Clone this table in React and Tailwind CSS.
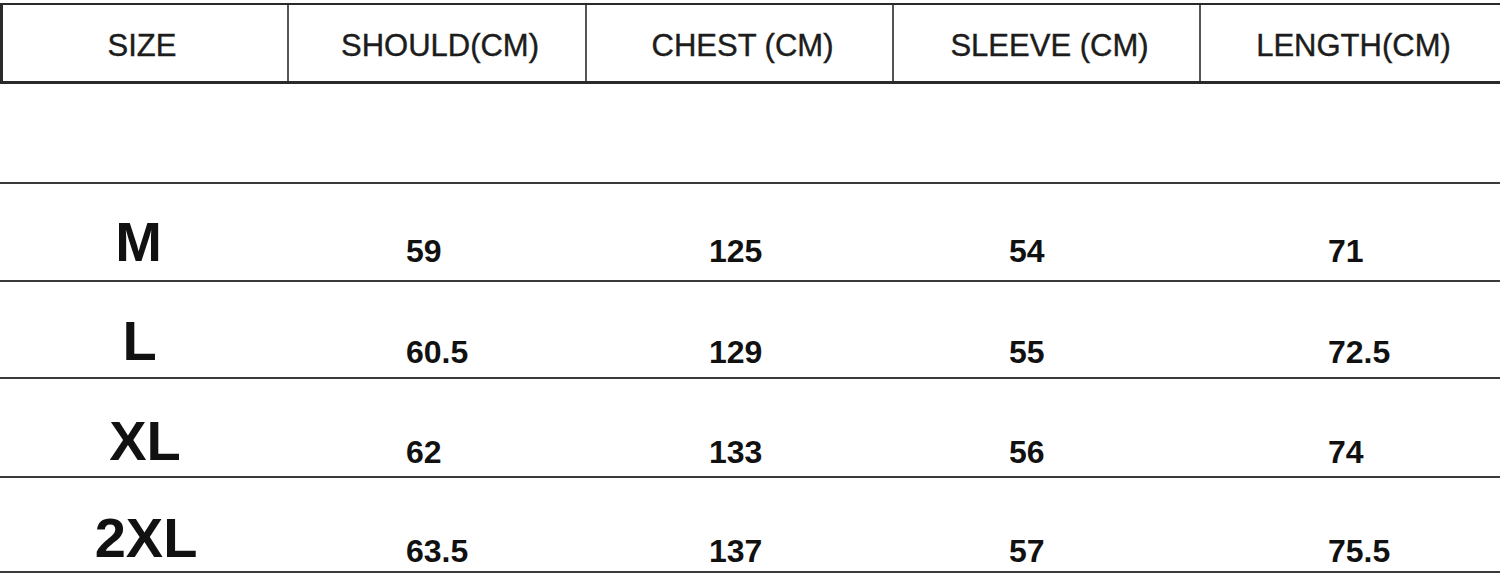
import React from 'react';

const headers = ['SIZE', 'SHOULD(CM)', 'CHEST (CM)', 'SLEEVE (CM)', 'LENGTH(CM)'];
const headPad = ['pr-[6px]', 'pl-[6px]', 'pl-[6px]', 'pl-[6px]', 'pl-[6px]'];

const rows = [
  { size: 'M', vals: ['59', '125', '54', '71'], h: 'h-[98px]', lp: 'pb-[10px] pr-[10px]', np: 'pb-[13px]' },
  { size: 'L', vals: ['60.5', '129', '55', '72.5'], h: 'h-[97px]', lp: 'pb-[8px] pr-[8px]', np: 'pb-[9px]' },
  { size: 'XL', vals: ['62', '133', '56', '74'], h: 'h-[99px]', lp: 'pb-[7px] pl-[3px]', np: 'pb-[8px]' },
  { size: '2XL', vals: ['63.5', '137', '57', '75.5'], h: 'h-[97px]', lp: 'pb-[5px] pl-[5px]', np: 'pb-[4px]' },
];

const valPad = ['pl-[119px]', 'pl-[124px]', 'pl-[117px]', 'pl-[129px]'];

function HeaderRow() {
  return (
    <div className="mt-[3px] h-[81px] grid grid-cols-[284px_298px_307px_307px_1fr] border-t-2 border-b-[3px] border-l-[3px] border-[#2a2a2a]">
      {headers.map((h, i) => (
        <div
          key={h}
          className={
            'flex items-center justify-center pt-1 text-[31px] leading-none text-[#1c1c1c] [-webkit-text-stroke:0.4px_#1c1c1c] ' +
            headPad[i] +
            (i > 0 ? ' border-l-2 border-[#555]' : '')
          }
        >
          {h}
        </div>
      ))}
    </div>
  );
}

export default function App() {
  return (
    <div className="w-[1500px] h-[578px] bg-white overflow-hidden font-['Liberation_Sans',Arial,sans-serif]">
      <HeaderRow />
      <div className="h-[98px]" />
      {rows.map((r, idx) => (
        <div
          key={r.size}
          className={
            r.h +
            ' grid grid-cols-[287px_298px_307px_307px_1fr] border-t-2 border-[#3a3a3a]' +
            (idx === rows.length - 1 ? ' border-b-2' : '')
          }
        >
          <div className={'flex items-end justify-center text-[56px] font-bold leading-none text-[#111] ' + r.lp}>
            {r.size}
          </div>
          {r.vals.map((v, i) => (
            <div key={i} className={'flex items-end text-[32px] font-bold leading-none text-[#111] ' + valPad[i] + ' ' + r.np}>
              {v}
            </div>
          ))}
        </div>
      ))}
    </div>
  );
}
